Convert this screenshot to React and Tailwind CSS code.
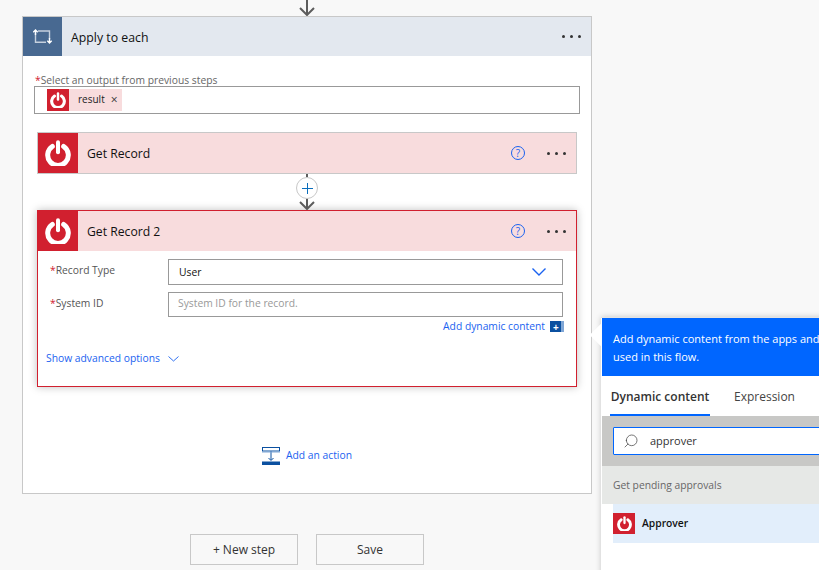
import { Search } from "lucide-react";

const font = { fontFamily: '"Open Sans", "Noto Sans", sans-serif' };

const Power = ({ size }) => (
  <svg width={size} height={size} viewBox="0 0 26 26" fill="none" stroke="white" strokeLinecap="round">
    <path d="M7.300 6.500a10.300 10.300 0 1 0 11.400 0" strokeWidth="5" />
    <path d="M13 2.300v10" strokeWidth="4" />
  </svg>
);

const Dots = () => (
  <div className="flex gap-[5px]">
    <span className="w-[3px] h-[3px] rounded-full bg-[#333]" />
    <span className="w-[3px] h-[3px] rounded-full bg-[#333]" />
    <span className="w-[3px] h-[3px] rounded-full bg-[#333]" />
  </div>
);

const Help = () => (
  <div className="w-[14px] h-[14px] rounded-full border border-[#1a62f0] flex items-center justify-center text-[10px] leading-none text-[#1a62f0]">
    ?
  </div>
);

const Arrow = ({ h }) => (
  <svg width="18" height={h} viewBox={`0 0 18 ${h}`} fill="none" stroke="#5c5c5c" strokeWidth="2" className="block">
    <path d={`M9 0v${h - 1}M2 ${h - 8}l7 7 7-7`} />
  </svg>
);

const Chevron = ({ w, h, sw }) => (
  <svg width={w} height={h} viewBox={`0 0 ${w} ${h}`} fill="none" stroke="#1a62f0" strokeWidth={sw}>
    <path d={`M.5 .5L${w / 2} ${h - 1}L${w - 0.5} .5`} />
  </svg>
);

const RecordHeader = ({ title }) => (
  <div className="flex items-center bg-[#f8dcdd] h-10">
    <div className="w-10 h-full bg-[#d1202f] flex items-center justify-center">
      <Power size={26} />
    </div>
    <span className="ml-[9px] pt-[3px] text-[12.2px] text-[#111]">{title}</span>
    <div className="ml-auto flex items-center mr-[10px]">
      <Help />
      <div className="ml-[22px]">
        <Dots />
      </div>
    </div>
  </div>
);

const Field = ({ label, children }) => (
  <div className="flex">
    <div className="w-[130px] pl-3 text-[10.3px] text-[#555] leading-[22px]">
      <span className="text-[#d1202f]">*</span>
      {label}
    </div>
    {children}
  </div>
);

export default function App() {
  return (
    <div className="relative w-[819px] h-[570px] overflow-hidden bg-[#f8f8f8]" style={font}>
      <div className="w-[570px] ml-[22px]">
        <div className="flex justify-center h-4">
          <Arrow h={16} />
        </div>
        <div className="border border-[#c8c8c8] bg-white h-[478px]">
          <div className="flex items-center bg-[#e3e8ef] h-[39px]">
            <div className="w-[39px] h-full bg-[#486991] flex items-center justify-center">
              <svg width="20" height="15" viewBox="0 0 20 15" fill="none" strokeWidth="1.400">
                <path d="M2.500 4v9.300H13M5 2h11.500v8" stroke="#c5d0de" />
                <path d="M2.500 6V1M.3 3.200l2.200-2.200 2.200 2.200M16.500 9v5M14.300 11.800l2.200 2.200 2.200-2.200" stroke="#fff" />
              </svg>
            </div>
            <span className="ml-[9px] pt-[3px] text-[12.3px] text-[#111]">Apply to each</span>
            <div className="ml-auto mr-[10px]">
              <Dots />
            </div>
          </div>

          <div className="pl-[11px] pr-[11px] pt-[18px]">
            <div className="text-[10.3px] leading-[12px] text-[#666] pl-[1px]">
              <span className="text-[#d1202f]">*</span>Select an output from previous steps
            </div>
            <div className="h-7 border border-[#999] flex items-center pl-3">
              <div className="flex items-center h-[22px] bg-[#f8dcdd] w-[75px]">
                <div className="w-[22px] h-full bg-[#d1202f] flex items-center justify-center">
                  <Power size={16} />
                </div>
                <span className="ml-[9px] pb-px text-[10px] text-[#222]">result</span>
                <span className="ml-[6px] text-[12px] leading-none text-[#333]">×</span>
              </div>
            </div>
          </div>

          <div className="mx-[14px] mt-[18px] border border-[#c8c8c8]">
            <RecordHeader title="Get Record" />
          </div>

          <div className="relative flex flex-col items-center h-[36px]">
            <div className="w-[2px] h-[3px] bg-[#5c5c5c]" />
            <div className="w-[22px] h-[22px] rounded-full border border-[#c8c8c8] bg-white flex items-center justify-center z-10">
              <svg width="11" height="11" viewBox="0 0 11 11" stroke="#0a6ebd" strokeWidth="1">
                <path d="M5.500 0v11M0 5.500h11" />
              </svg>
            </div>
            <div className="-mt-px">
              <Arrow h={12} />
            </div>
          </div>

          <div className="mx-[14px] h-[177px] border border-[#d1202f] shadow-[0_0_8px_rgba(0,0,0,0.25)]">
            <RecordHeader title="Get Record 2" />
            <div className="pt-2 pr-[13px]">
              <Field label="Record Type">
                <div className="flex-1 h-[26px] border border-[#999] flex items-center justify-between pl-[10px] pr-[16px] text-[10.3px] text-[#111]">
                  <span className="pt-px">User</span>
                  <Chevron w={14} h={8} sw={1.400} />
                </div>
              </Field>
              <div className="mt-[7px]">
                <Field label="System ID">
                  <div className="flex-1 h-[25px] border border-[#999] flex items-center pl-[9px] pb-px text-[10.3px] text-[#999]">
                    System ID for the record.
                  </div>
                </Field>
              </div>
              <div className="flex justify-end items-center mt-[2px] h-[15px] -mr-[1px] text-[10.3px] text-[#1a62f0]">
                Add dynamic content
                <div className="ml-[5px] w-[14px] h-[11px] bg-[#0b50a0] flex items-center text-white text-[10px] font-bold leading-none pl-[3px] border-r-[3px] border-[#7fa6d6]">
                  +
                </div>
              </div>
            </div>
            <div className="flex items-center mt-[17px] pl-[8px] text-[10.3px] text-[#1a62f0]">
              Show advanced options
              <span className="ml-[8px]">
                <Chevron w={11} h={6} sw={0.900} />
              </span>
            </div>
          </div>

          <div className="flex items-center justify-center mt-[60px] text-[10.3px] text-[#1a62f0]">
            <svg width="18" height="18" viewBox="0 0 18 18" fill="none" className="mr-[6px]">
              <rect x=".5" y=".5" width="17" height="3.500" stroke="#0b50a0" />
              <path d="M9 4v9M6.500 11L9 13.500 11.500 11" stroke="#0b50a0" />
              <path d="M0 5h18" stroke="#7fa6d6" />
              <rect y="14.500" width="18" height="3.500" fill="#0b50a0" />
            </svg>
            Add an action
          </div>
        </div>
      </div>

      <div className="flex gap-[18px] ml-[190px] mt-10">
        <div className="w-[108px] h-[31px] pt-px border border-[#c8c8c8] flex items-center justify-center text-[12px] text-[#333]">
          + New step
        </div>
        <div className="w-[108px] h-[31px] pt-px border border-[#c8c8c8] flex items-center justify-center text-[12px] text-[#333]">
          Save
        </div>
      </div>

      <div className="absolute left-[601px] top-[317px] w-[300px] h-[260px] bg-white border-t border-[#e4e4e4] shadow-[0_0_6px_rgba(0,0,0,0.2)]">
        <div className="absolute -left-[8px] top-[9px] w-4 h-4 rotate-45 bg-white" />
        <div className="relative ml-px h-[58px] bg-[#0066ff] text-white text-[11px] leading-[18px] pl-[11px] pt-3 whitespace-nowrap">
          Add dynamic content from the apps and
          <br />
          used in this flow.
        </div>
        <div className="flex h-10 text-[12px]">
          <div className="ml-[9px] w-[100px] text-center pt-px leading-[40px] font-semibold text-[#333] border-b-2 border-[#0066ff]">
            Dynamic content
          </div>
          <div className="ml-6 pt-px leading-[40px] text-[#444]">Expression</div>
        </div>
        <div className="ml-px h-[50px] bg-[#c8c8c6] pl-[11px] pt-[11px]">
          <div className="h-[28px] bg-white border border-[#0066ff] rounded-[1px] flex items-center pl-[9px] text-[11px] text-[#333]">
            <Search size={16} strokeWidth={1.100} className="-scale-x-100 text-[#444]" />
            <span className="ml-[11px]">approver</span>
          </div>
        </div>
        <div className="ml-px h-[38px] bg-[#e6e8e6] pl-[11px] pt-[2px] flex items-center text-[10.3px] text-[#666]">Get pending approvals</div>
        <div className="ml-3 h-[39px] bg-[#e2eefb] flex items-center text-[10.3px] font-semibold text-[#111]">
          <div className="w-[22px] h-[21px] bg-[#d1202f] flex items-center justify-center">
            <Power size={15} />
          </div>
          <span className="ml-[7px] pt-px">Approver</span>
        </div>
      </div>
    </div>
  );
}
